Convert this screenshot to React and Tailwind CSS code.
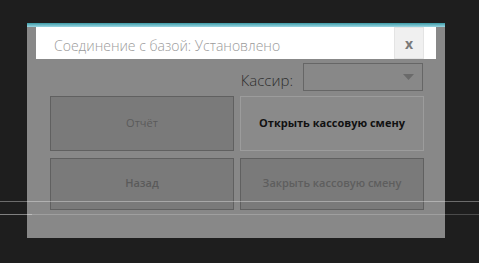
export default function App() {
  return (
    <div
      className="relative w-[479px] h-[263px] bg-[#1e1e1e] overflow-hidden"
      style={{ fontFamily: '"Open Sans", "Noto Sans", sans-serif' }}
    >
      <div className="absolute left-[27px] top-[23px] w-[418px] h-[215px] bg-[#888888] flex flex-col">
        <div className="h-[4px] bg-gradient-to-b from-[#3a9aa6] to-[#9ad8e4]" />
        <div className="mx-[9px] h-[32px] bg-white flex items-center">
          <div className="flex-1 pl-[18px] pt-[6px] text-[14px] font-light text-[#9a9a9a] leading-none">
            Соединение с базой: Установлено
          </div>
          <div className="w-[30px] h-[32px] mr-[12px] bg-[#f0f0f0] border border-[#e4e4e4] flex items-center justify-center text-[14px] font-bold text-[#7a7a7a]">
            x
          </div>
        </div>
        <div className="flex items-center justify-end pr-[22px] pt-[4px] gap-[10px]">
          <span className="text-[15px] font-light text-[#2e2e2e] pt-[6px]">Кассир:</span>
          <div className="w-[120px] h-[28px] border border-[#666666] flex items-center justify-end pr-[8px]">
            <svg width="11" height="7" viewBox="0 0 11 7">
              <path d="M0 0 L11 0 L5.5 6 Z" fill="#6a6a6a" />
            </svg>
          </div>
        </div>
        <div className="grid grid-cols-[184px_184px] gap-x-[6px] gap-y-[7px] pl-[23px] pt-[4px]">
          <div className="h-[55px] bg-[#7a7a7a] border border-[#606060] flex items-center justify-center text-[11px] text-[#5a5a5a]">
            Отчёт
          </div>
          <div className="h-[55px] bg-[#8a8a8a] border border-[#9c9c9c] flex items-center justify-center text-[11px] font-bold text-[#111111]">
            Открыть кассовую смену
          </div>
          <div className="h-[52px] bg-[#7a7a7a] border border-[#606060] flex items-center justify-center text-[11px] font-semibold text-[#5a5a5a]">
            Назад
          </div>
          <div className="h-[52px] bg-[#7a7a7a] border border-[#606060] flex items-center justify-center text-[11px] font-semibold text-[#5e5e5e]">
            Закрыть кассовую смену
          </div>
        </div>
      </div>
      <div className="absolute left-0 right-0 top-[201px] h-[1px] bg-white/35" />
      <div className="absolute left-0 right-0 top-[214px] h-[1px] bg-white/20" />
      <div className="absolute left-0 w-[32px] top-[214px] h-[1px] bg-white/30" />
    </div>
  );
}
